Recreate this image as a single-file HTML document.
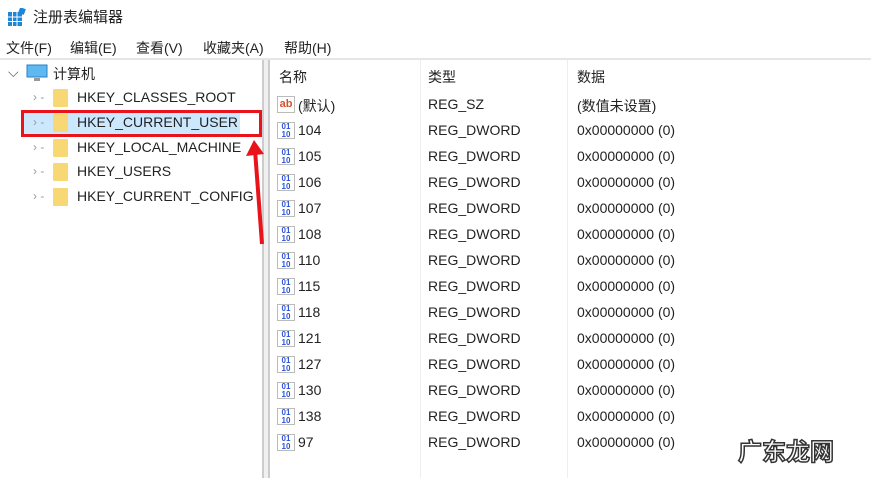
<!DOCTYPE html><html><head><meta charset="utf-8"><style>
body{margin:0;width:871px;height:478px;background:#fff;overflow:hidden;position:relative;font-family:"Liberation Sans","Noto Sans CJK SC",sans-serif;font-size:14px;color:#222}
.a{position:absolute;white-space:nowrap}
.fold{position:absolute;width:15px;height:18px;background:#f8d775;border-radius:1px}
.chev{position:absolute;color:#999;font-size:12px}
.ic{position:absolute;width:18px;height:17px;border:1px solid #bbb;background:#fff;font-size:8px;line-height:8px;color:#2b54d8;font-weight:bold;text-align:center;box-sizing:border-box}
</style></head><body>
<svg class="a" style="left:8px;top:8px" width="18" height="18"><rect x="0" y="4" width="14" height="14" fill="#1c86d9"/><g stroke="#fff" stroke-width="1"><line x1="0" y1="9" x2="14" y2="9"/><line x1="0" y1="13.5" x2="14" y2="13.5"/><line x1="4.5" y1="4" x2="4.5" y2="18"/><line x1="9" y1="4" x2="9" y2="18"/></g><rect x="11" y="0" width="6" height="6" fill="#1c86d9" transform="rotate(20 14 3)"/></svg>
<div class="a" style="left:33px;top:6px;font-size:15px">注册表编辑器</div>
<div class="a" style="left:6px;top:38px">文件(F)</div>
<div class="a" style="left:70px;top:38px">编辑(E)</div>
<div class="a" style="left:136px;top:38px">查看(V)</div>
<div class="a" style="left:203px;top:38px">收藏夹(A)</div>
<div class="a" style="left:284px;top:38px">帮助(H)</div>
<div class="a" style="left:0;top:58px;width:871px;height:2px;background:#e6e6e6"></div>
<div class="a" style="left:262px;top:60px;width:2px;height:418px;background:#ccc"></div>
<div class="a" style="left:268px;top:60px;width:2px;height:418px;background:#ccc"></div>
<div class="a" style="left:264px;top:60px;width:4px;height:418px;background:#f0f0f0"></div>
<div class="a" style="left:8px;top:64px;color:#555">⌵</div>
<svg class="a" style="left:26px;top:64px" width="22" height="18"><rect x="1" y="1" width="20" height="12" fill="#5fb8f0" stroke="#2a7fc4"/><rect x="8" y="14" width="6" height="3" fill="#999"/></svg>
<div class="a" style="left:53px;top:64px">计算机</div>
<div class="a" style="left:22px;top:112px;width:218px;height:23px;background:#cce8ff"></div>
<div class="chev" style="left:33px;top:90px">›&nbsp;-</div><div class="fold" style="left:53px;top:89px"></div><div class="a" style="left:77px;top:89px">HKEY_CLASSES_ROOT</div>
<div class="chev" style="left:33px;top:115px">›&nbsp;-</div><div class="fold" style="left:53px;top:114px"></div><div class="a" style="left:77px;top:114px">HKEY_CURRENT_USER</div>
<div class="chev" style="left:33px;top:140px">›&nbsp;-</div><div class="fold" style="left:53px;top:139px"></div><div class="a" style="left:77px;top:139px">HKEY_LOCAL_MACHINE</div>
<div class="chev" style="left:33px;top:164px">›&nbsp;-</div><div class="fold" style="left:53px;top:163px"></div><div class="a" style="left:77px;top:163px">HKEY_USERS</div>
<div class="chev" style="left:33px;top:189px">›&nbsp;-</div><div class="fold" style="left:53px;top:188px"></div><div class="a" style="left:77px;top:188px;width:183px;overflow:hidden">HKEY_CURRENT_CONFIG</div>
<div class="a" style="left:21px;top:110px;width:235px;height:21px;border:3px solid #e8131b"></div>
<svg class="a" style="left:240px;top:138px" width="30" height="110"><line x1="22" y1="106" x2="15" y2="12" stroke="#e8131b" stroke-width="4"/><polygon points="6,18 14,2 24,16" fill="#e8131b"/></svg>
<div class="a" style="left:420px;top:60px;width:1px;height:418px;background:#eee"></div>
<div class="a" style="left:567px;top:60px;width:1px;height:418px;background:#eee"></div>
<div class="a" style="left:279px;top:67px">名称</div><div class="a" style="left:428px;top:67px">类型</div><div class="a" style="left:577px;top:67px">数据</div>
<div class="ic" style="left:277px;top:96px;color:#d9502f;font-size:11px;line-height:15px">ab</div><div class="a" style="left:298px;top:96px">(默认)</div><div class="a" style="left:428px;top:96px">REG_SZ</div><div class="a" style="left:577px;top:96px">(数值未设置)</div>
<div id="r"></div>
<script>
var n=["104","105","106","107","108","110","115","118","121","127","130","138","97"],h="";
n.forEach(function(v,i){var y=122+i*26;h+='<div class="ic" style="left:277px;top:'+(y)+'px">01<br>10</div><div class="a" style="left:298px;top:'+y+'px">'+v+'</div><div class="a" style="left:428px;top:'+y+'px">REG_DWORD</div><div class="a" style="left:577px;top:'+y+'px">0x00000000 (0)</div>';});
document.getElementById("r").outerHTML=h;
</script>
<div class="a" style="left:738px;top:432px;font-size:24px;font-weight:bold;color:#fff;-webkit-text-stroke:1.5px #333">广东龙网</div>
</body></html>
